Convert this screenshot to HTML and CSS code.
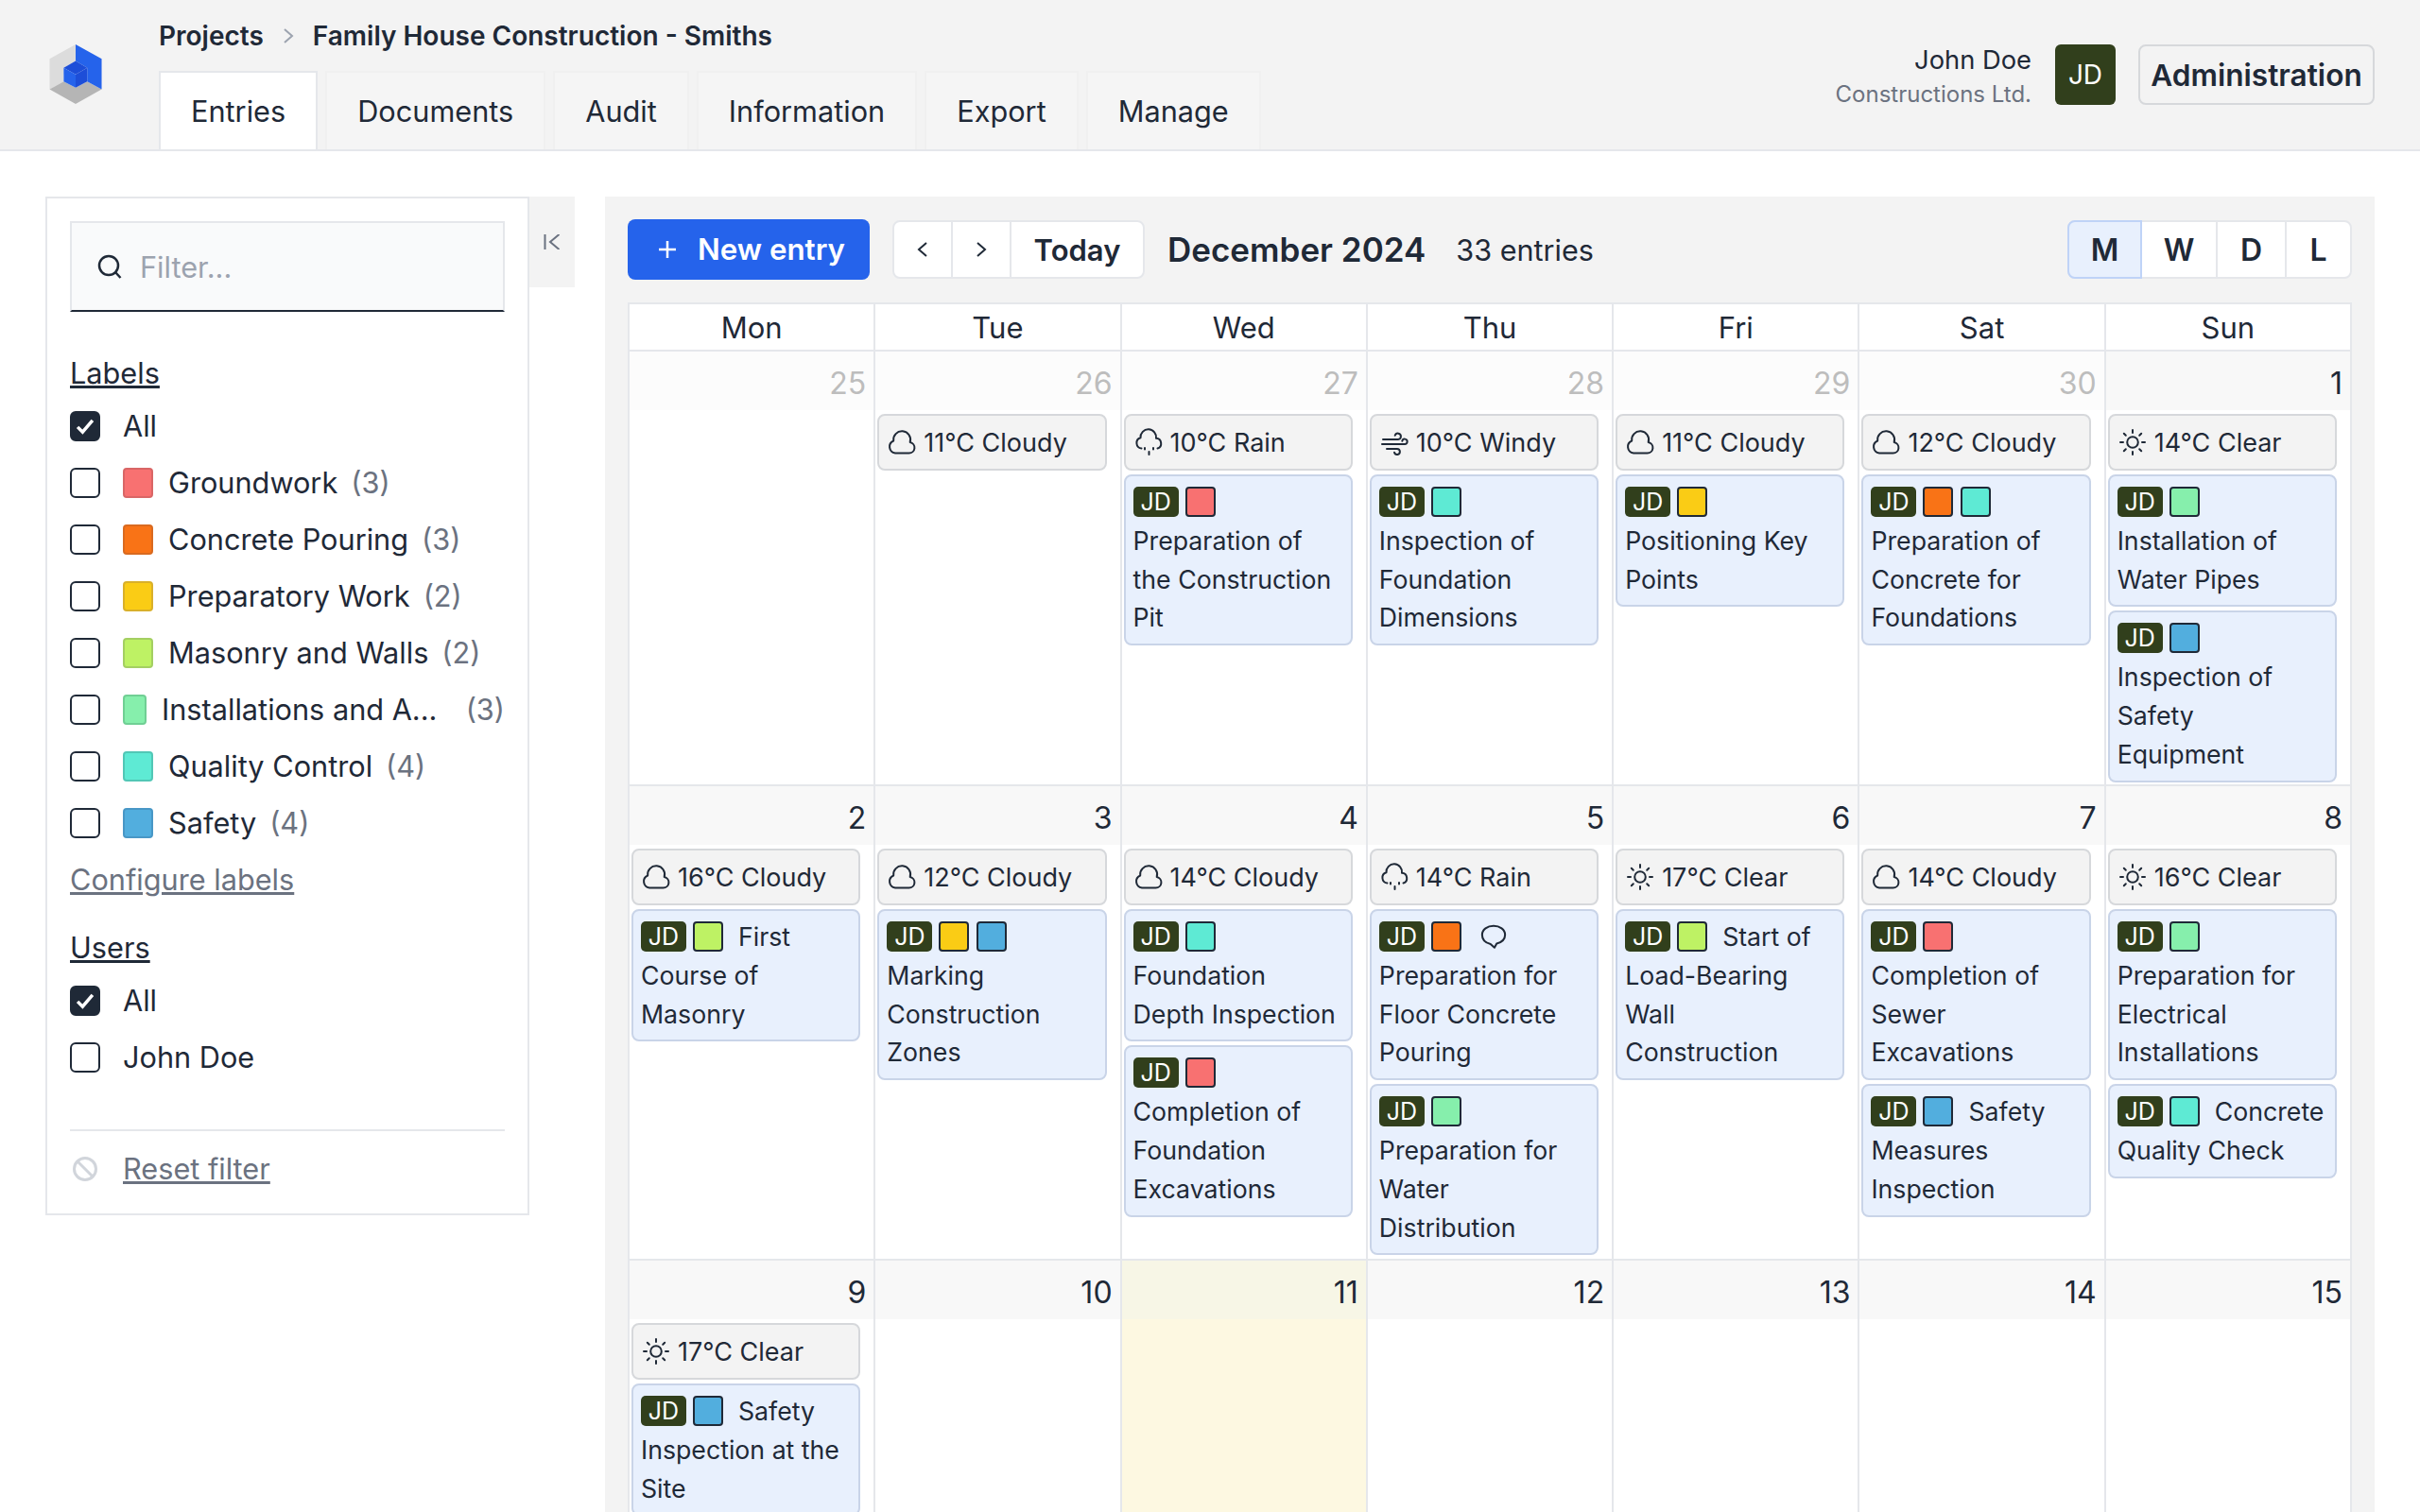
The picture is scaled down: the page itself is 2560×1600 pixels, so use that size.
FILE: index.html
```html
<!DOCTYPE html>
<html lang="en">
<head>
<meta charset="utf-8">
<title>Family House Construction - Smiths</title>
<link rel="stylesheet" href="styles.css">
</head>
<body>
<svg class="defs" width="0" height="0" aria-hidden="true">
  <symbol id="i-cloud" viewBox="0 0 30 30"><path d="M8 26.500h14.500a5.800 5.800 0 0 0 1.200-11.500 9 9 0 1 0-17.500-1.500A6.800 6.800 0 0 0 8 26.500z"/></symbol>
  <symbol id="i-rain" viewBox="0 0 30 30"><path d="M7.500 21.500A5.800 5.800 0 0 1 6.500 10.200a8.300 8.300 0 1 1 16.500.6 5.500 5.500 0 0 1 1.500 10.700"/><path d="M11 21v1.500M15.500 25v3M20 21v1.500"/></symbol>
  <symbol id="i-wind" viewBox="0 0 30 30"><path d="M3 12h16a3.200 3.200 0 1 0-3.300-4.200"/><path d="M2 17h24a2.700 2.700 0 1 0-2.700-3.300"/><path d="M7 22h11a3 3 0 1 1-3 3.800"/></symbol>
  <symbol id="i-sun" viewBox="0 0 30 30"><circle cx="15" cy="15" r="5.800"/><path d="M15 2v3M15 25v3M2 15h3M25 15h3M5.800 5.800l2 2M22.200 22.200l2 2M5.800 24.200l2-2M22.200 7.800l2-2"/></symbol>
  <symbol id="i-comment" viewBox="0 0 30 30"><path d="M11.500 23.500C5.500 22 2 18 2 13 2 7 8 3 15 3s13 4 13 10c0 5-4 8.500-9.500 10l-2.500 4.500z"/></symbol>
</svg>

<header class="topbar">
  <svg class="logo" viewBox="67 82 166 190" aria-label="Logo">
    <polygon fill="#dcdcdc" points="150,82 67,128 67,225 112,200 112,157 150,135"/>
    <polygon fill="#b5b5b5" points="67,225 112,200 150,220 187,200 233,225 150,272"/>
    <polygon fill="#2563eb" points="150,82 233,128 233,225 187,200 187,157 150,135"/>
    <polygon fill="#1d4ed8" points="150,135 187,157 150,178 112,157"/>
    <polygon fill="#2563eb" points="112,157 150,178 150,220 112,200"/>
    <polygon fill="#1d4ed8" points="150,178 187,157 187,200 150,220"/>
  </svg>
  <div class="nav">
    <div class="crumbs">
      <span>Projects</span>
      <svg class="crumb-sep" viewBox="0 0 12 20"><path d="M2 3l8 7-8 7"/></svg>
      <span>Family House Construction - Smiths</span>
    </div>
    <nav class="tabs">
      <a class="tab active">Entries</a>
      <a class="tab">Documents</a>
      <a class="tab">Audit</a>
      <a class="tab">Information</a>
      <a class="tab">Export</a>
      <a class="tab">Manage</a>
    </nav>
  </div>
  <div class="account">
    <div class="who">
      <div class="who-name">John Doe</div>
      <div class="who-co">Constructions Ltd.</div>
    </div>
    <div class="avatar">JD</div>
    <button class="admin">Administration</button>
  </div>
</header>

<main class="page">
  <aside class="sidebar">
    <div class="search">
      <svg class="search-icon" viewBox="0 0 26 26"><circle cx="12" cy="12" r="10"/><path d="M19 19l5.500 6"/></svg>
      <span class="placeholder">Filter...</span>
    </div>
    <h3 class="side-title">Labels</h3>
    <div class="opt"><span class="check on"><svg viewBox="0 0 32 32"><path d="M7 17l6 6 12-14"/></svg></span><span class="opt-plain">All</span></div>
    <div class="opt"><span class="check"></span><span class="swatch-lg red"></span><span class="opt-text">Groundwork</span><span class="count">(3)</span></div>
    <div class="opt"><span class="check"></span><span class="swatch-lg orange"></span><span class="opt-text">Concrete Pouring</span><span class="count">(3)</span></div>
    <div class="opt"><span class="check"></span><span class="swatch-lg yellow"></span><span class="opt-text">Preparatory Work</span><span class="count">(2)</span></div>
    <div class="opt"><span class="check"></span><span class="swatch-lg lime"></span><span class="opt-text">Masonry and Walls</span><span class="count">(2)</span></div>
    <div class="opt"><span class="check"></span><span class="swatch-lg green narrow"></span><span class="opt-text">Installations and A...</span><span class="count push">(3)</span></div>
    <div class="opt"><span class="check"></span><span class="swatch-lg teal"></span><span class="opt-text">Quality Control</span><span class="count">(4)</span></div>
    <div class="opt"><span class="check"></span><span class="swatch-lg blue"></span><span class="opt-text">Safety</span><span class="count">(4)</span></div>
    <a class="side-link">Configure labels</a>
    <h3 class="side-title users">Users</h3>
    <div class="opt"><span class="check on"><svg viewBox="0 0 32 32"><path d="M7 17l6 6 12-14"/></svg></span><span class="opt-plain">All</span></div>
    <div class="opt"><span class="check"></span><span class="opt-plain">John Doe</span></div>
    <div class="reset">
      <svg class="reset-icon" viewBox="0 0 26 26"><circle cx="13" cy="13" r="11.500"/><path d="M5 5l16 16"/></svg>
      <a class="side-link">Reset filter</a>
    </div>
  </aside>

  <button class="collapse" aria-label="Collapse">
    <svg viewBox="0 0 18 16"><path d="M1.500 0v16M16.500 0L7 8l9.500 8"/></svg>
  </button>

  <section class="panel">
    <div class="toolbar">
      <button class="new-entry"><svg viewBox="0 0 20 20"><path d="M10 1v18M1 10h18"/></svg>New entry</button>
      <div class="pager">
        <button class="pg"><svg viewBox="0 0 12 20"><path d="M10 3l-8 7 8 7"/></svg></button>
        <button class="pg"><svg viewBox="0 0 12 20"><path d="M2 3l8 7-8 7"/></svg></button>
        <button class="pg today">Today</button>
      </div>
      <h1 class="month">December 2024</h1>
      <span class="total">33 entries</span>
      <div class="views">
        <button class="view sel">M</button>
        <button class="view w">W</button>
        <button class="view d">D</button>
        <button class="view l">L</button>
      </div>
    </div>

    <div class="cal">
      <div class="dow">Mon</div><div class="dow">Tue</div><div class="dow">Wed</div><div class="dow">Thu</div><div class="dow">Fri</div><div class="dow">Sat</div><div class="dow">Sun</div>

      <div class="day other"><div class="num">25</div></div>
      <div class="day other"><div class="num">26</div>
        <div class="wx"><svg><use href="#i-cloud"/></svg>11°C Cloudy</div>
      </div>
      <div class="day other"><div class="num">27</div>
        <div class="wx"><svg><use href="#i-rain"/></svg>10°C Rain</div>
        <div class="ev"><span class="jd">JD</span><span class="sw red"></span>Preparation of the Construction Pit</div>
      </div>
      <div class="day other"><div class="num">28</div>
        <div class="wx"><svg><use href="#i-wind"/></svg>10°C Windy</div>
        <div class="ev"><span class="jd">JD</span><span class="sw teal"></span>Inspection of Foundation Dimensions</div>
      </div>
      <div class="day other"><div class="num">29</div>
        <div class="wx"><svg><use href="#i-cloud"/></svg>11°C Cloudy</div>
        <div class="ev"><span class="jd">JD</span><span class="sw yellow"></span>Positioning Key Points</div>
      </div>
      <div class="day other"><div class="num">30</div>
        <div class="wx"><svg><use href="#i-cloud"/></svg>12°C Cloudy</div>
        <div class="ev"><span class="jd">JD</span><span class="sw orange"></span><span class="sw teal"></span>Preparation of Concrete for Foundations</div>
      </div>
      <div class="day"><div class="num">1</div>
        <div class="wx"><svg><use href="#i-sun"/></svg>14°C Clear</div>
        <div class="ev"><span class="jd">JD</span><span class="sw green"></span>Installation of Water Pipes</div>
        <div class="ev"><span class="jd">JD</span><span class="sw blue"></span>Inspection of Safety Equipment</div>
      </div>

      <div class="day"><div class="num">2</div>
        <div class="wx"><svg><use href="#i-cloud"/></svg>16°C Cloudy</div>
        <div class="ev"><span class="jd">JD</span><span class="sw lime"></span><span class="lead">First</span> Course of Masonry</div>
      </div>
      <div class="day"><div class="num">3</div>
        <div class="wx"><svg><use href="#i-cloud"/></svg>12°C Cloudy</div>
        <div class="ev"><span class="jd">JD</span><span class="sw yellow"></span><span class="sw blue"></span>Marking Construction Zones</div>
      </div>
      <div class="day"><div class="num">4</div>
        <div class="wx"><svg><use href="#i-cloud"/></svg>14°C Cloudy</div>
        <div class="ev"><span class="jd">JD</span><span class="sw teal"></span>Foundation Depth Inspection</div>
        <div class="ev"><span class="jd">JD</span><span class="sw red"></span>Completion of Foundation Excavations</div>
      </div>
      <div class="day"><div class="num">5</div>
        <div class="wx"><svg><use href="#i-rain"/></svg>14°C Rain</div>
        <div class="ev"><span class="jd">JD</span><span class="sw orange"></span><svg class="note"><use href="#i-comment"/></svg>Preparation for Floor Concrete Pouring</div>
        <div class="ev"><span class="jd">JD</span><span class="sw green"></span>Preparation for Water Distribution</div>
      </div>
      <div class="day"><div class="num">6</div>
        <div class="wx"><svg><use href="#i-sun"/></svg>17°C Clear</div>
        <div class="ev"><span class="jd">JD</span><span class="sw lime"></span><span class="lead">Start of</span> Load-Bearing Wall Construction</div>
      </div>
      <div class="day"><div class="num">7</div>
        <div class="wx"><svg><use href="#i-cloud"/></svg>14°C Cloudy</div>
        <div class="ev"><span class="jd">JD</span><span class="sw red"></span>Completion of Sewer Excavations</div>
        <div class="ev"><span class="jd">JD</span><span class="sw blue"></span><span class="lead">Safety</span> Measures Inspection</div>
      </div>
      <div class="day"><div class="num">8</div>
        <div class="wx"><svg><use href="#i-sun"/></svg>16°C Clear</div>
        <div class="ev"><span class="jd">JD</span><span class="sw green"></span>Preparation for Electrical Installations</div>
        <div class="ev"><span class="jd">JD</span><span class="sw teal"></span><span class="lead">Concrete</span> Quality Check</div>
      </div>

      <div class="day"><div class="num">9</div>
        <div class="wx"><svg><use href="#i-sun"/></svg>17°C Clear</div>
        <div class="ev"><span class="jd">JD</span><span class="sw blue"></span><span class="lead">Safety</span> Inspection at the Site</div>
      </div>
      <div class="day"><div class="num">10</div></div>
      <div class="day today-col"><div class="num">11</div></div>
      <div class="day"><div class="num">12</div></div>
      <div class="day"><div class="num">13</div></div>
      <div class="day"><div class="num">14</div></div>
      <div class="day"><div class="num">15</div></div>
    </div>
  </section>
</main>
</body>
</html>
```

FILE: styles.css
```css
* { box-sizing: border-box; }
html, body { margin: 0; height: 1600px; overflow: hidden; }
body { font-family: Inter, "Liberation Sans", sans-serif; font-size: 30.700px; color: #1f2937; background: #fff; }
button { font: inherit; color: inherit; cursor: pointer; }
h1, h3 { margin: 0; font: inherit; }
.defs { position: absolute; }

/* Header */
.topbar { height: 160px; display: flex; background: #f3f3f3; border-bottom: 2px solid #e5e7eb; }
.logo { width: 56px; height: 63px; margin: 47px 60px 0 52px; flex: none; }
.nav { display: flex; flex-direction: column; flex: 1; }
.crumbs { height: 76px; display: flex; align-items: center; gap: 20px; font-size: 28px; font-weight: 600; }
.crumb-sep { width: 12px; height: 20px; fill: none; stroke: #9ca3af; stroke-width: 2; }
.tabs { display: flex; gap: 8px; height: 84px; }
.tab { display: flex; align-items: center; justify-content: center; padding: 0 32px; background: #f5f5f5; border: 2px solid #f0f0f0; border-bottom: 0; }
.tab.active { background: #fff; border-color: #e5e7eb; }
.account { display: flex; align-items: flex-start; padding: 47px 48px 0 0; }
.who { text-align: right; margin-right: 25px; }
.who-name { font-size: 27.300px; line-height: 34px; }
.who-co { font-size: 24px; line-height: 38px; color: #6b7280; }
.avatar { width: 64px; height: 64px; border-radius: 6px; background: #313f1c; color: #fff; font-size: 28px; display: flex; align-items: center; justify-content: center; }
.admin { width: 250px; height: 64px; margin-left: 24px; background: #f3f3f3; border: 2px solid #d6d8db; border-radius: 8px; font-size: 31.600px; font-weight: 600; padding: 0; }

/* Layout */
.page { display: flex; align-items: flex-start; padding: 48px 48px 0; }

/* Sidebar */
.sidebar { width: 512px; height: 1078px; flex: none; border: 2px solid #e5e7eb; padding: 24px 24px 0; }
.search { height: 96px; display: flex; align-items: center; gap: 19px; padding-left: 27px; background: #f9fafb; border: 2px solid #e5e7eb; border-bottom-color: #1f2937; }
.search-icon { width: 26px; height: 26px; fill: none; stroke: #1f2937; stroke-width: 2.500; }
.placeholder { color: #9ca3af; }
.side-title { height: 52px; margin-top: 39px; line-height: 52px; text-decoration: underline; }
.side-title.users { margin-top: 16px; }
.opt { height: 60px; display: flex; align-items: center; white-space: nowrap; }
.check { width: 32px; height: 32px; flex: none; border: 2px solid #1f2937; border-radius: 6px; background: #fff; }
.check.on { background: #1f2937; }
.check svg { display: block; width: 28px; height: 28px; fill: none; stroke: #fff; stroke-width: 4; }
.opt-plain { margin: -2px 0 0 24px; }
.swatch-lg { width: 32px; height: 32px; flex: none; margin-left: 24px; border-radius: 4px; border: 2px solid; }
.swatch-lg.narrow { width: 25px; }
.opt-text { margin: -2px 0 0 16px; }
.count { margin: -2px 0 0 14px; color: #6b7280; }
.count.push { margin-left: auto; }
.side-link { display: block; height: 60px; line-height: 60px; color: #6b7280; text-decoration: underline; }
.reset { display: flex; align-items: center; height: 72px; margin-top: 46px; border-top: 2px solid #e5e7eb; padding-top: 10px; }
.reset-icon { width: 26px; height: 26px; flex: none; margin-left: 3px; fill: none; stroke: #d1d5db; stroke-width: 3; }
.reset-icon + .side-link { height: auto; margin-left: 27px; }

/* Swatch colours */
.red { background: #f87171; border-color: #d96666; }
.orange { background: #f97316; border-color: #d96a20; }
.yellow { background: #facc15; border-color: #d9b02a; }
.lime { background: #bef264; border-color: #a4cf62; }
.green { background: #86efac; border-color: #70cf94; }
.teal { background: #5eead4; border-color: #52c7b6; }
.blue { background: #52aede; border-color: #4897c6; }

/* Collapse */
.collapse { width: 48px; height: 96px; flex: none; background: #f3f3f3; border: 0; padding: 0; display: flex; align-items: center; justify-content: center; }
.collapse svg { width: 18px; height: 16px; fill: none; stroke: #6b7280; stroke-width: 2; }

/* Panel */
.panel { flex: 1; margin-left: 32px; height: 1392px; background: #f3f3f3; padding: 24px; }
.toolbar { display: flex; align-items: center; height: 64px; margin-bottom: 24px; }
.new-entry { width: 256px; height: 64px; display: flex; align-items: center; gap: 22px; padding: 0 0 0 32px; background: #2563eb; color: #fff; border: 0; border-radius: 8px; font-size: 31.300px; font-weight: 600; }
.new-entry svg { width: 20px; height: 20px; fill: none; stroke: #fff; stroke-width: 2.500; flex: none; }
.pager { display: flex; height: 62px; margin-left: 24px; background: #fff; border: 2px solid #e5e7eb; border-radius: 8px; }
.pg { width: 62px; background: none; border: 0; border-right: 2px solid #e5e7eb; padding: 0; display: flex; align-items: center; justify-content: center; }
.pg svg { width: 12px; height: 20px; fill: none; stroke: #1f2937; stroke-width: 2; }
.pg.today { width: 139px; border-right: 0; font-size: 31px; font-weight: 600; }
.month { margin-left: 24px; font-size: 35px; font-weight: 600; }
.total { margin-left: 32px; font-size: 30.600px; }
.views { display: flex; margin-left: auto; height: 62px; background: #fff; border: 2px solid #e5e7eb; border-radius: 8px; }
.view { background: none; border: 0; border-right: 2px solid #e5e7eb; padding: 0; font-size: 32px; font-weight: 600; }
.view.sel { width: 79px; margin: -2px 0 -2px -2px; background: #e8f0fd; border: 2px solid #bfd3f7; border-radius: 8px 0 0 8px; }
.view.w { width: 80px; }
.view.d { width: 73px; }
.view.l { width: 67px; border-right: 0; }

/* Calendar */
.cal { display: grid; grid-template-columns: repeat(7, 1fr); grid-template-rows: 50px 460px 502px auto; width: 1824px; background: #fff; border-top: 2px solid #e5e7eb; border-right: 2px solid #e5e7eb; }
.dow { height: 50px; border-left: 2px solid #e5e7eb; border-bottom: 2px solid #e5e7eb; text-align: center; line-height: 49px; font-size: 31px; }
.day { min-width: 0; border-left: 2px solid #e5e7eb; border-bottom: 2px solid #e5e7eb; }
.num { height: 62px; margin-bottom: 4px; padding-right: 8px; background: #f8f8f8; text-align: right; line-height: 67px; font-size: 32px; }
.other .num { background: #fcfcfc; color: #bdbdbd; }
.today-col { background: #fdf8e1; }
.today-col .num { background: #f7f6e6; }
.wx, .ev { margin: 0 14px 4px 2px; border: 2px solid; border-radius: 8px; }
.wx { height: 60px; display: flex; align-items: center; gap: 8px; padding-left: 9px; background: #f3f3f3; border-color: #d6d8db; font-size: 27px; }
.wx svg { width: 30px; height: 30px; flex: none; fill: none; stroke: #1f2937; stroke-width: 2; stroke-linecap: round; stroke-linejoin: round; }
.ev { padding: 7px 8px; background: #e8f0fd; border-color: #c9d4e8; font-size: 26.700px; line-height: 40.800px; }
.jd, .sw, .note { display: inline-block; height: 32px; margin-top: 4px; vertical-align: top; }
.jd { width: 48px; margin-right: 7px; border-radius: 5px; background: #313f1c; color: #fff; font-size: 25px; line-height: 32px; text-align: center; }
.sw { width: 32px; margin-right: 8px; border-radius: 4px; border: 2px solid; }
.note { width: 28px; margin-left: 12px; fill: none; stroke: #1f2937; stroke-width: 2.200; stroke-linejoin: round; }
.lead { margin-left: 8px; }
```
